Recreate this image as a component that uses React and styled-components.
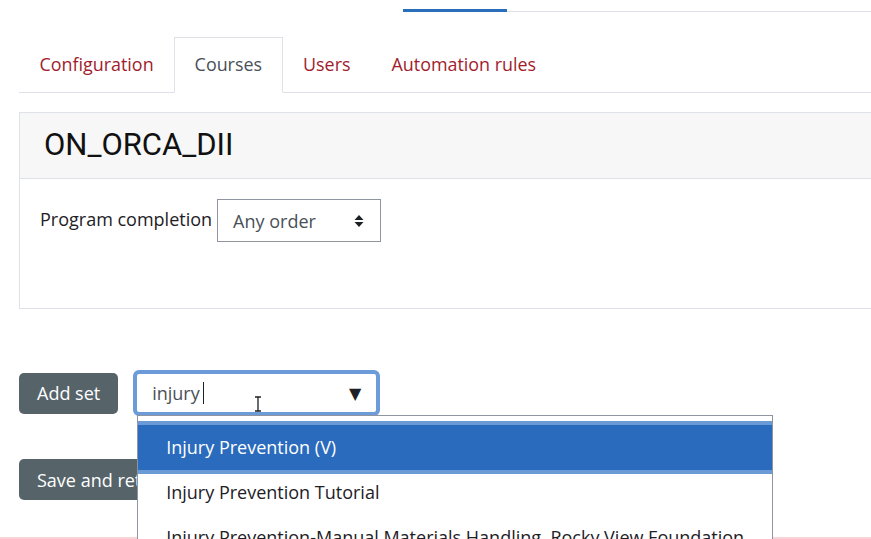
import React from 'react';
import styled, { createGlobalStyle } from 'styled-components';

const GlobalStyle = createGlobalStyle`
  html, body {
    margin: 0;
    padding: 0;
    background: #fff;
    overflow: hidden;
  }
  body {
    font-family: "Open Sans", "Liberation Sans", sans-serif;
    color: #1d2125;
  }
`;

const tabs = ['Configuration', 'Courses', 'Users', 'Automation rules'];

const options = [
    'Injury Prevention (V)',
    'Injury Prevention Tutorial',
    'Injury Prevention-Manual Materials Handling, Rocky View Foundation',
];

const App = () => {
    return (
        <>
            <GlobalStyle/>
            <Page>
                <NavStrip>
                    <NavActive/>
                    <NavRest/>
                </NavStrip>
                <Main>
                    <TabList>
                        {tabs.map(t => (
                            <Tab key={t} active={t === 'Courses'}>{t}</Tab>
                        ))}
                    </TabList>
                    <Card>
                        <CardHeader>
                            <Title>ON_ORCA_DII</Title>
                        </CardHeader>
                        <CardBody>
                            <Label>Program completion</Label>
                            <Select>
                                <span>Any order</span>
                                <SortIcon viewBox="0 0 10 14">
                                    <path d="M5 1 L9.5 6 L0.5 6 Z M5 13 L9.5 8 L0.5 8 Z" fill="#1d2125"/>
                                </SortIcon>
                            </Select>
                        </CardBody>
                    </Card>
                    <ActionRow>
                        <Button>Add set</Button>
                        <Combo>
                            <ComboInput>
                                <Typed>injury</Typed>
                                <Caret/>
                                <IBeam viewBox="0 0 8 16">
                                    <path d="M1 1 H7 M4 1 V15 M1 15 H7" stroke="#1d2125" strokeWidth="1.3" fill="none"/>
                                </IBeam>
                                <Arrow>▼</Arrow>
                            </ComboInput>
                            <Suggestions>
                                {options.map((o, i) => (
                                    <Option key={o} selected={i === 0}>{o}</Option>
                                ))}
                            </Suggestions>
                        </Combo>
                    </ActionRow>
                    <SaveRow>
                        <Button>Save and return</Button>
                    </SaveRow>
                </Main>
                <AlertEdge/>
            </Page>
        </>
    );
};

export default App;

const Page = styled.div`
  width: 871px;
  height: 539px;
  display: flex;
  flex-direction: column;
`;

const NavStrip = styled.div`
  display: flex;
  align-items: flex-end;
  margin: 9px 0 0 403px;
  height: 3px;
`;

const NavActive = styled.div`
  width: 104px;
  height: 3px;
  background-color: #2a6ebb;
`;

const NavRest = styled.div`
  flex: 1;
  height: 1px;
  background-color: #dee2e6;
`;

const Main = styled.div`
  padding-left: 19px;
  margin-top: 25px;
`;

const TabList = styled.div`
  display: flex;
  border-bottom: 1px solid #dee2e6;
`;

const Tab = styled.div`
  font-size: 17.9px;
  height: 54px;
  line-height: 53px;
  padding: 0 19.5px;
  margin-bottom: -1px;
  border: 1px solid ${props => props.active ? '#dee2e6' : 'transparent'};
  border-bottom-color: ${props => props.active ? '#fff' : 'transparent'};
  color: ${props => props.active ? '#495057' : '#a01c2c'};
  background-color: ${props => props.active ? '#fff' : 'transparent'};
`;

const Card = styled.div`
  margin-top: 19px;
  width: 900px;
  border: 1px solid #dee2e6;
  background-color: #fff;
`;

const CardHeader = styled.div`
  background-color: #f7f7f7;
  border-bottom: 1px solid #dee2e6;
  padding: 0 24px;
  height: 65px;
  display: flex;
  align-items: center;
`;

const Title = styled.h2`
  margin: 0 0 3px;
  font-family: Roboto, "Liberation Sans", sans-serif;
  font-weight: 400;
  font-size: 31px;
  color: #111;
`;

const CardBody = styled.div`
  display: flex;
  align-items: flex-start;
  padding: 20px 20px;
  height: 89px;
`;

const Label = styled.div`
  font-size: 18px;
  line-height: 40px;
  margin-right: 5px;
`;

const Select = styled.div`
  box-sizing: border-box;
  width: 164px;
  height: 43px;
  border: 1px solid #8f959e;
  padding: 0 16px 0 15px;
  display: flex;
  align-items: center;
  justify-content: space-between;
  font-size: 18px;
  color: #495057;
`;

const SortIcon = styled.svg`
  width: 10px;
  height: 14px;
`;

const ActionRow = styled.div`
  display: flex;
  align-items: center;
  margin-top: 61px;
  gap: 15px;
`;

const Button = styled.div`
  box-sizing: border-box;
  height: 41px;
  padding: 0 18px;
  display: flex;
  align-items: center;
  background-color: #56646a;
  color: #fff;
  font-size: 18px;
  border-radius: 5px;
  white-space: nowrap;
`;

const Combo = styled.div`
  position: relative;
`;

const ComboInput = styled.div`
  position: relative;
  box-sizing: border-box;
  width: 247px;
  height: 46px;
  border: 4px solid #6b9bd8;
  border-radius: 6px;
  padding: 0 0 0 15px;
  display: flex;
  align-items: center;
  font-size: 18px;
  color: #495057;
`;

const Typed = styled.span`
  line-height: 1;
`;

const Caret = styled.span`
  display: inline-block;
  width: 1px;
  height: 22px;
  margin-left: 3px;
  background-color: #1d2125;
`;

const IBeam = styled.svg`
  position: absolute;
  left: 117px;
  top: 22px;
  width: 8px;
  height: 16px;
`;

const Arrow = styled.span`
  position: absolute;
  right: 15px;
  top: 10px;
  font-size: 16px;
  color: #1d2125;
  font-family: "DejaVu Sans", sans-serif;
`;

const Suggestions = styled.div`
  position: absolute;
  left: 4px;
  top: 45px;
  width: 636px;
  height: 140px;
  box-sizing: border-box;
  border: 1px solid #8f959e;
  border-bottom: none;
  background-color: #fff;
  padding-top: 9px;
  overflow: hidden;
  z-index: 2;
`;

const Option = styled.div`
  height: 45px;
  line-height: 45px;
  padding-left: 28px;
  font-size: 18px;
  white-space: nowrap;
  color: ${props => props.selected ? '#fff' : '#1d2125'};
  background-color: ${props => props.selected ? '#2a6bbd' : 'transparent'};
  box-shadow: ${props => props.selected ? '0 0 0 4px #6b9bd6' : 'none'};
`;

const SaveRow = styled.div`
  display: flex;
  margin-top: 43px;
`;

const AlertEdge = styled.div`
  margin-top: auto;
  height: 2px;
  background-color: #f8d4d8;
`;
